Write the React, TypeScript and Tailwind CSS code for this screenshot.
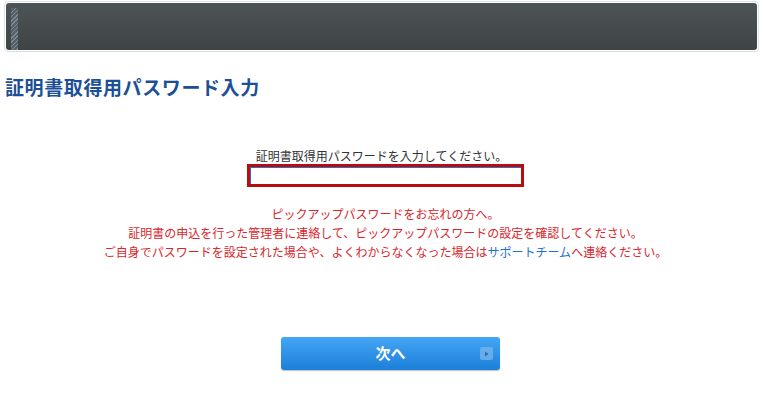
const jp = { fontFamily: '"Noto Sans CJK JP", "Noto Sans", sans-serif' };

function Header() {
  return (
    <div className="mx-[4px] mt-[1px] rounded-[4px] border border-[#d9e1e5] bg-white p-[1px]">
      <div className="h-[47px] rounded-[3px] bg-gradient-to-b from-[#4d5457] to-[#3f4344] pl-[5px] pt-[5px]">
        <div className="h-[42px] w-[7px] rounded-t-[2px] bg-[repeating-linear-gradient(135deg,#7d8a92_0px,#7d8a92_1px,#55606a_1px,#55606a_3px)]" />
      </div>
    </div>
  );
}

function NextButton() {
  return (
    <button className="relative flex h-[33px] w-[219px] items-center justify-center rounded-[3px] bg-gradient-to-b from-[#44a6f5] to-[#1b7fd8] shadow-[0_1px_1px_rgba(0,0,0,0.25)]">
      <span className="text-[15px] font-bold text-white">次へ</span>
      <span className="absolute right-[7px] top-[10px] flex h-[13px] w-[13px] items-center justify-center rounded-[2px] bg-[#7bb8ec]/70">
        <svg width="5" height="6" viewBox="0 0 5 6">
          <path d="M1 0.5 L4.5 3 L1 5.5 Z" fill="#2a6fb8" />
        </svg>
      </span>
    </button>
  );
}

export default function App() {
  return (
    <div className="h-[415px] w-[763px] overflow-hidden bg-white" style={jp}>
      <Header />
      <h1 className="mt-[22px] pl-[5px] text-[19px] font-bold leading-[26px] tracking-[0.6px] text-[#1d4f97]">
        証明書取得用パスワード入力
      </h1>
      <div className="mt-[48px] flex flex-col items-center pl-[8px]">
        <p className="pr-[8px] text-[12px] leading-[16px] text-[#333]">証明書取得用パスワードを入力してください。</p>
        <input
          className="h-[23px] w-[277px] border-[3px] border-[#b80d0d] bg-white px-1 text-[12px] outline-none shadow-[inset_1px_1px_0_#2a6fd0]"
          type="password"
        />
        <div className="mt-[17px] text-center text-[12px] leading-[19px] text-[#d9262b]">
          <p>ピックアップパスワードをお忘れの方へ。</p>
          <p>証明書の申込を行った管理者に連絡して、ピックアップパスワードの設定を確認してください。</p>
          <p>
            ご自身でパスワードを設定された場合や、よくわからなくなった場合は
            <a className="text-[#1f6fd0]">サポートチーム</a>
            へ連絡ください。
          </p>
        </div>
        <div className="ml-[10px] mt-[76px]">
          <NextButton />
        </div>
      </div>
    </div>
  );
}
